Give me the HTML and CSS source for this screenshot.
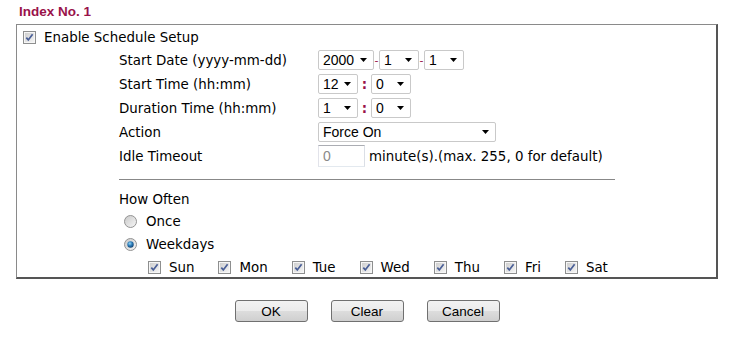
FILE: index.html
```html
<!DOCTYPE html>
<html lang="en">
<head>
    <meta charset="UTF-8">
    <title>Schedule Setup</title>
    <link rel="stylesheet" href="styles.css">
</head>
<body>
    <div class="title">Index No. 1</div>

    <div class="panel">
        <label class="enable"><input type="checkbox" class="chk" checked>Enable Schedule Setup</label>

        <div class="form-grid">
            <span class="lbl">Start Date (yyyy-mm-dd)</span>
            <div class="ctl">
                <select class="sel w-year"><option>2000</option></select><span class="dash">-</span><select class="sel w-sm"><option>1</option></select><span class="dash">-</span><select class="sel w-sm"><option>1</option></select>
            </div>

            <span class="lbl">Start Time (hh:mm)</span>
            <div class="ctl">
                <select class="sel w-sm"><option>12</option></select><span class="colon">:</span><select class="sel w-sm"><option>0</option></select>
            </div>

            <span class="lbl">Duration Time (hh:mm)</span>
            <div class="ctl">
                <select class="sel w-sm"><option>1</option></select><span class="colon">:</span><select class="sel w-sm"><option>0</option></select>
            </div>

            <span class="lbl">Action</span>
            <div class="ctl">
                <select class="sel w-action"><option>Force On</option></select>
            </div>

            <span class="lbl">Idle Timeout</span>
            <div class="ctl">
                <input type="text" class="txt" value="0"><span class="hint">minute(s).(max. 255, 0 for default)</span>
            </div>
        </div>

        <div class="divider"></div>

        <div class="often">
            <div class="row">How Often</div>
            <label class="row radio-row"><input type="radio" class="rad" name="often">Once</label>
            <label class="row radio-row"><input type="radio" class="rad" name="often" checked>Weekdays</label>
            <div class="days">
                <label class="day"><input type="checkbox" class="chk" checked>Sun</label>
                <label class="day"><input type="checkbox" class="chk" checked>Mon</label>
                <label class="day"><input type="checkbox" class="chk" checked>Tue</label>
                <label class="day"><input type="checkbox" class="chk" checked>Wed</label>
                <label class="day"><input type="checkbox" class="chk" checked>Thu</label>
                <label class="day"><input type="checkbox" class="chk" checked>Fri</label>
                <label class="day"><input type="checkbox" class="chk" checked>Sat</label>
            </div>
        </div>
    </div>

    <div class="buttons">
        <button class="btn">OK</button>
        <button class="btn">Clear</button>
        <button class="btn">Cancel</button>
    </div>
</body>
</html>
```

FILE: styles.css
```css
body {
    margin: 0;
    padding: 0;
    background: #fff;
    color: #000;
    font-family: "DejaVu Sans", Verdana, sans-serif;
    font-size: 13.4px;
}
.title {
    font-family: "Liberation Sans", Arial, sans-serif;
    font-weight: bold;
    font-size: 13.5px;
    color: #99124a;
    padding: 4px 0 0 19px;
    height: 20px;
    box-sizing: border-box;
}
.panel {
    margin-left: 16px;
    width: 702px;
    height: 255px;
    box-sizing: border-box;
    border-style: solid;
    border-color: #8a8a8a #555 #555 #8a8a8a;
    border-width: 1px 2px 2px 1px;
    padding: 4px 0 0 0;
    margin-top: 4px;
}
.enable {
    display: flex;
    align-items: center;
    height: 17px;
    padding-left: 6px;
}
.enable .chk {
    margin-right: 8px;
}
.chk {
    appearance: none;
    -webkit-appearance: none;
    width: 13px;
    height: 13px;
    margin: 0;
    flex: none;
    background: url("data:image/svg+xml,%3Csvg xmlns='http://www.w3.org/2000/svg' width='13' height='13'%3E%3Cdefs%3E%3ClinearGradient id='g' x1='0' y1='0' x2='1' y2='1'%3E%3Cstop offset='0' stop-color='%23cfcfcf'/%3E%3Cstop offset='1' stop-color='%23f4f4f4'/%3E%3C/linearGradient%3E%3C/defs%3E%3Crect x='0.5' y='0.5' width='12' height='12' fill='%23f6f6f6' stroke='%238e8f8f'/%3E%3Crect x='2' y='2' width='9' height='9' fill='url(%23g)'/%3E%3Cpath d='M3.3 6.6 L5.3 8.9 L9.6 3.2' fill='none' stroke='%234a5f97' stroke-width='1.7'/%3E%3C/svg%3E") no-repeat;
}
.rad {
    appearance: none;
    -webkit-appearance: none;
    width: 13px;
    height: 13px;
    margin: 0 9px 0 5px;
    flex: none;
    background: url("data:image/svg+xml,%3Csvg xmlns='http://www.w3.org/2000/svg' width='13' height='13'%3E%3Cdefs%3E%3ClinearGradient id='g' x1='0' y1='0' x2='1' y2='1'%3E%3Cstop offset='0' stop-color='%23c8c8c8'/%3E%3Cstop offset='1' stop-color='%23f8f8f8'/%3E%3C/linearGradient%3E%3C/defs%3E%3Ccircle cx='6.5' cy='6.5' r='6' fill='url(%23g)' stroke='%23939393'/%3E%3C/svg%3E") no-repeat;
}
.rad:checked {
    background: url("data:image/svg+xml,%3Csvg xmlns='http://www.w3.org/2000/svg' width='13' height='13'%3E%3Cdefs%3E%3ClinearGradient id='g' x1='0' y1='0' x2='1' y2='1'%3E%3Cstop offset='0' stop-color='%23c8c8c8'/%3E%3Cstop offset='1' stop-color='%23f8f8f8'/%3E%3C/linearGradient%3E%3CradialGradient id='d' cx='0.4' cy='0.35' r='0.7'%3E%3Cstop offset='0' stop-color='%2399d6f5'/%3E%3Cstop offset='0.5' stop-color='%232a7bb8'/%3E%3Cstop offset='1' stop-color='%23123e6a'/%3E%3C/radialGradient%3E%3C/defs%3E%3Ccircle cx='6.5' cy='6.5' r='6' fill='url(%23g)' stroke='%23939393'/%3E%3Ccircle cx='6.5' cy='6.5' r='3.2' fill='url(%23d)'/%3E%3C/svg%3E") no-repeat;
}
.form-grid {
    display: grid;
    grid-template-columns: 199px auto;
    grid-auto-rows: 24px;
    align-items: center;
    margin: 2px 0 0 102px;
}
.ctl {
    display: flex;
    align-items: center;
}
.sel {
    appearance: none;
    -webkit-appearance: none;
    height: 20px;
    box-sizing: border-box;
    border: 1px solid #c9c9c9;
    border-radius: 2px;
    padding: 0 0 0 4px;
    margin: 0;
    font-family: "Liberation Sans", Arial, sans-serif;
    font-size: 14px;
    color: #000;
    background: #fff url("data:image/svg+xml,%3Csvg xmlns='http://www.w3.org/2000/svg' width='7' height='4'%3E%3Cpath d='M0 0 H7 L3.5 4 Z' fill='%23000'/%3E%3C/svg%3E") no-repeat right 6px center;
}
.w-year {
    width: 56px;
}
.w-sm {
    width: 40px;
}
.w-action {
    width: 178px;
}
.dash {
    color: #99124a;
    font-size: 11px;
    width: 5px;
    text-align: center;
}
.colon {
    color: #99124a;
    width: 13px;
    text-align: center;
    font-weight: bold;
}
.txt {
    width: 47px;
    height: 22px;
    box-sizing: border-box;
    border: 1px solid #abadb3;
    border-color: #abadb3 #dbdfe6 #e3e9ef #e2e3ea;
    padding: 0 4px;
    margin: 0;
    font-family: "Liberation Sans", Arial, sans-serif;
    font-size: 14px;
    color: #8a8a8a;
}
.hint {
    margin-left: 4px;
}
.divider {
    margin: 11px 0 0 102px;
    width: 496px;
    border-top: 1px solid #888;
}
.often {
    margin: 8px 0 0 102px;
}
.row {
    display: flex;
    align-items: center;
    height: 22px;
}
.radio-row {
    height: 23px;
}
.days {
    display: flex;
    align-items: center;
    height: 22px;
    padding-left: 29px;
    gap: 24px;
}
.day {
    display: flex;
    align-items: center;
}
.day .chk {
    margin-right: 8px;
}
.buttons {
    display: flex;
    justify-content: center;
    gap: 23px;
    width: 734px;
    margin-top: 21px;
}
.btn {
    width: 73px;
    height: 22px;
    border: 1px solid #707070;
    border-radius: 3px;
    background: linear-gradient(#f2f2f2, #ebebeb 50%, #dddddd 50%, #cfcfcf);
    font-family: "Liberation Sans", Arial, sans-serif;
    font-size: 13.5px;
    color: #000;
    padding: 0;
}
```
